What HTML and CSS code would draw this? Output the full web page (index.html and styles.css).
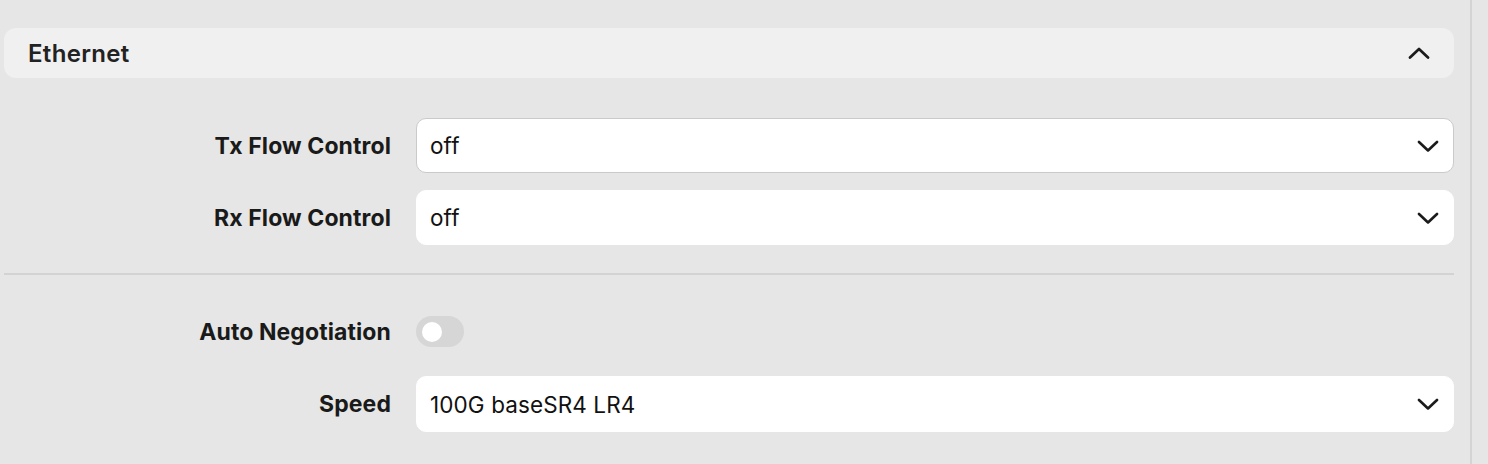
FILE: index.html
```html
<!DOCTYPE html>
<html lang="en">
<head>
<meta charset="utf-8">
<title>Ethernet</title>
<link rel="stylesheet" href="styles.css">
</head>
<body>
<div class="page">
  <main class="main">
    <div class="section-header">
      <span class="section-title">Ethernet</span>
      <svg class="chev-up" width="22" height="12" viewBox="0 0 22 12"><polyline points="2,10.5 11,2 20,10.5" fill="none" stroke="#1b1b1b" stroke-width="2.7" stroke-linecap="round" stroke-linejoin="round"/></svg>
    </div>
    <div class="form">
      <div class="group">
        <div class="row">
          <label class="label">Tx Flow Control</label>
          <div class="select select-focus">
            <span class="value">off</span>
            <svg class="chev" width="22" height="12" viewBox="0 0 22 12"><polyline points="2,2 11,10.5 20,2" fill="none" stroke="#1b1b1b" stroke-width="2.6" stroke-linecap="round" stroke-linejoin="round"/></svg>
          </div>
        </div>
        <div class="row">
          <label class="label">Rx Flow Control</label>
          <div class="select">
            <span class="value">off</span>
            <svg class="chev" width="22" height="12" viewBox="0 0 22 12"><polyline points="2,2 11,10.5 20,2" fill="none" stroke="#1b1b1b" stroke-width="2.6" stroke-linecap="round" stroke-linejoin="round"/></svg>
          </div>
        </div>
      </div>
      <div class="divider"></div>
      <div class="group">
        <div class="row">
          <label class="label">Auto Negotiation</label>
          <div class="toggle"><span class="knob"></span></div>
        </div>
        <div class="row row-tall">
          <label class="label">Speed</label>
          <div class="select">
            <span class="value">100G baseSR4 LR4</span>
            <svg class="chev" width="22" height="12" viewBox="0 0 22 12"><polyline points="2,2 11,10.5 20,2" fill="none" stroke="#1b1b1b" stroke-width="2.6" stroke-linecap="round" stroke-linejoin="round"/></svg>
          </div>
        </div>
      </div>
    </div>
  </main>
  <aside class="side"></aside>
</div>
</body>
</html>
```

FILE: styles.css
```css
* { box-sizing: border-box; }
html, body { margin: 0; padding: 0; }
body {
  background: #e5e6e5;
  font-family: Inter, "Liberation Sans", sans-serif;
  color: #1b1b1b;
}
.page {
  display: flex;
  min-height: 464px;
}
.main {
  width: 1470px;
  flex: none;
  padding: 28px 16px 0 4px;
}
.side {
  flex: 1;
  border-left: 2px solid #d3d4d3;
}
.section-header {
  height: 50px;
  background: #f0f0f0;
  border-radius: 12px;
  display: flex;
  align-items: center;
  justify-content: space-between;
  padding: 0 24px 0 24px;
}
.section-title {
  font-size: 24px;
  font-weight: 600;
  letter-spacing: 0.3px;
  color: #222;
}
.form {
  margin-top: 40px;
}
.group {
  display: flex;
  flex-direction: column;
  gap: 17px;
}
.row {
  display: grid;
  grid-template-columns: 387px 1fr;
  column-gap: 25px;
  align-items: center;
  height: 55px;
}
.row-tall { height: 56px; }
.row-tall .select { height: 56px; }
.label {
  text-align: right;
  font-size: 23px;
  font-weight: 700;
  letter-spacing: 0.1px;
  color: #1a1a1a;
}
.select {
  height: 55px;
  background: #ffffff;
  border-radius: 10px;
  border: 1px solid #ffffff;
  display: flex;
  align-items: center;
  justify-content: space-between;
  padding: 0 14px 0 13px;
}
.select-focus {
  border: 1.5px solid #c9cac9;
}
.value {
  font-size: 22.5px;
  font-weight: 400;
  color: #111;
  letter-spacing: 0.1px;
}
.divider {
  height: 2px;
  background: #d2d3d2;
  margin: 28px 0 29px;
}
.toggle {
  width: 48px;
  height: 31px;
  border-radius: 16px;
  background: #d5d6d5;
  display: flex;
  align-items: center;
  padding-left: 6px;
}
.knob {
  width: 20px;
  height: 20px;
  border-radius: 50%;
  background: #ffffff;
}
```
